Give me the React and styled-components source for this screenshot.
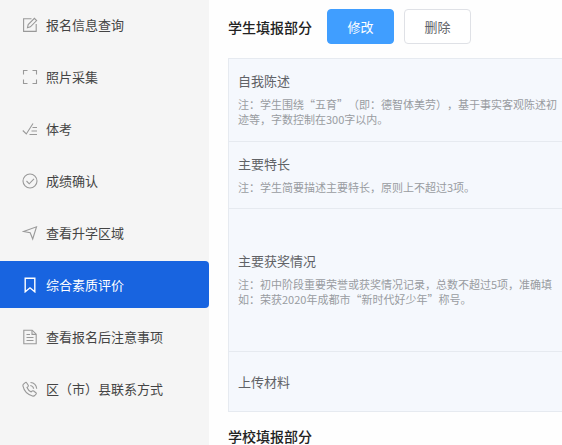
import styled, { createGlobalStyle } from "styled-components";

const GlobalStyle = createGlobalStyle`
    * {
        box-sizing: border-box;
    }

    body {
        margin: 0;
        background: #fefefe;
        font-family: "Noto Sans CJK SC", "Liberation Sans", sans-serif;
        text-spacing-trim: space-all;
    }
`;

const Page = styled.div`
    display: flex;
    min-height: 100vh;
`;

const Sidebar = styled.nav`
    flex: 0 0 209px;
    padding-top: 1px;
    background: #f5f5f5;
`;

const Menu = styled.ul`
    display: flex;
    flex-direction: column;
    gap: 5px;
    margin: 0;
    padding: 0;
    list-style: none;
`;

const MenuLink = styled.a`
    display: flex;
    align-items: center;
    gap: 8px;
    height: 47px;
    padding-left: 22px;
    border-radius: 0 4px 4px 0;
    background: ${(props) => (props.$active ? "#1864e0" : "transparent")};
    color: ${(props) => (props.$active ? "#ffffff" : "#444444")};
    font-size: 13px;
    text-decoration: none;
`;

const Icon = styled.svg`
    width: 16px;
    height: 16px;
    fill: none;
    stroke: ${(props) => (props.$active ? "#ffffff" : "#999999")};
    stroke-width: ${(props) => (props.$active ? 1.4 : 1.1)};
`;

const Content = styled.main`
    flex: 1;
    min-width: 0;
    padding: 9px 0 0 19px;
`;

const SectionHeader = styled.header`
    display: flex;
    align-items: center;
    gap: 10px;
`;

const SectionTitle = styled.h2`
    margin: 0;
    padding-right: 5px;
    color: #222222;
    font-size: 14px;
    font-weight: 500;
    line-height: 20px;
`;

const Button = styled.button`
    width: 67px;
    height: 35px;
    padding: 0;
    border: 1px solid ${(props) => (props.$primary ? "#409eff" : "#dfe1e6")};
    border-radius: 4px;
    background: ${(props) => (props.$primary ? "#409eff" : "#ffffff")};
    color: ${(props) => (props.$primary ? "#ffffff" : "#606266")};
    font-family: inherit;
    font-size: 13px;
`;

const Panel = styled.div`
    margin: 14px 0;
    border: 1px solid #e6eaf0;
    border-right: none;
    background: #f5f8fd;
    overflow: hidden;
`;

const Row = styled.section`
    display: flex;
    flex-direction: column;
    gap: 6px;
    padding: ${(props) => props.$space || "12px 0 13px"};
    padding-left: 9px;

    & + & {
        border-top: 1px solid #e6eaf0;
    }
`;

const RowTitle = styled.h3`
    margin: 0;
    color: #606266;
    font-size: 13px;
    font-weight: 400;
    line-height: 20px;
`;

const Note = styled.p`
    margin: 0;
    color: #999ca1;
    font-size: 11px;
    line-height: 15px;
    white-space: nowrap;
`;

const menuItems = [
    {
        label: "报名信息查询",
        icon: (
            <>
                <path d="M9.5 1.8H1.6v12.6h12.6V7" />
                <path d="M5.5 10.7l.7-3.1L12.4 1.4l2.2 2.2-6.200 6.200z" />
            </>
        ),
    },
    {
        label: "照片采集",
        icon: <path d="M1.5 5.5v-4h4M10.5 1.5h4v4M14.5 10.5v4h-4M5.5 14.5h-4v-4" />,
    },
    {
        label: "体考",
        icon: <path d="M.8 9.5L4.3 13 11 2.5M10.5 6.5H15M9.5 10H15M7.5 13.5H15" />,
    },
    {
        label: "成绩确认",
        icon: (
            <>
                <circle cx="8" cy="8" r="7" />
                <path d="M4.5 8l2.7 2.8 4.8-5" />
            </>
        ),
    },
    {
        label: "查看升学区域",
        icon: <path d="M1.5 6.5L14.5 1.8 10.7 14 8.2 7.8z" />,
    },
    {
        label: "综合素质评价",
        active: true,
        icon: <path d="M3.2 1.2h9.6v13.6L8 10.8l-4.8 4z" />,
    },
    {
        label: "查看报名后注意事项",
        icon: (
            <>
                <path d="M1.8 1.2h8.4l4 4v9.6H1.8z" />
                <path d="M10 1.4v4h4M4.5 5.5H8M4.5 8.5h7M4.5 11.5h7" />
            </>
        ),
    },
    {
        label: "区（市）县联系方式",
        icon: (
            <>
                <path d="M1.5 3.2L3.3 1.6c.5-.4 1-.3 1.3.2l1.6 2.4c.3.5.2 1-.2 1.4l-1 .9c.7 1.8 2.3 3.5 4.2 4.4l1-.9c.5-.4 1-.4 1.5 0l2.2 1.7c.5.4.5.9.1 1.4l-1.2 1.4c-.6.6-1.4.8-2.3.5C5.9 13.7 2 9.7 1 5.2c-.2-.8 0-1.5.5-2z" />
                <path d="M8.3 4.5c1.8.2 3.1 1.5 3.3 3.3M8.5 1.5c3.4.3 5.9 2.8 6.2 6.2" />
            </>
        ),
    },
];

const rows = [
    {
        title: "自我陈述",
        space: "12px 0 14px",
        notes: [
            "注：学生围绕“五育”（即：德智体美劳），基于事实客观陈述初",
            "迹等，字数控制在300字以内。",
        ],
    },
    {
        title: "主要特长",
        notes: ["注：学生简要描述主要特长，原则上不超过3项。"],
    },
    {
        title: "主要获奖情况",
        space: "42px 0 44px",
        notes: [
            "注：初中阶段重要荣誉或获奖情况记录，总数不超过5项，准确填",
            "如：荣获2020年成都市“新时代好少年”称号。",
        ],
    },
    { title: "上传材料", space: "20px 0 19px", notes: [] },
];

export default function App() {
    return (
        <>
            <GlobalStyle />
            <Page>
                <Sidebar>
                    <Menu>
                        {menuItems.map((item) => (
                            <li key={item.label}>
                                <MenuLink href="#" $active={item.active}>
                                    <Icon viewBox="0 0 16 16" $active={item.active} aria-hidden="true">
                                        {item.icon}
                                    </Icon>
                                    {item.label}
                                </MenuLink>
                            </li>
                        ))}
                    </Menu>
                </Sidebar>
                <Content>
                    <SectionHeader>
                        <SectionTitle>学生填报部分</SectionTitle>
                        <Button type="button" $primary>
                            修改
                        </Button>
                        <Button type="button">删除</Button>
                    </SectionHeader>
                    <Panel>
                        {rows.map((row) => (
                            <Row key={row.title} $space={row.space}>
                                <RowTitle>{row.title}</RowTitle>
                                {row.notes.length > 0 && (
                                    <div>
                                        {row.notes.map((note) => (
                                            <Note key={note}>{note}</Note>
                                        ))}
                                    </div>
                                )}
                            </Row>
                        ))}
                    </Panel>
                    <SectionTitle>学校填报部分</SectionTitle>
                </Content>
            </Page>
        </>
    );
}
